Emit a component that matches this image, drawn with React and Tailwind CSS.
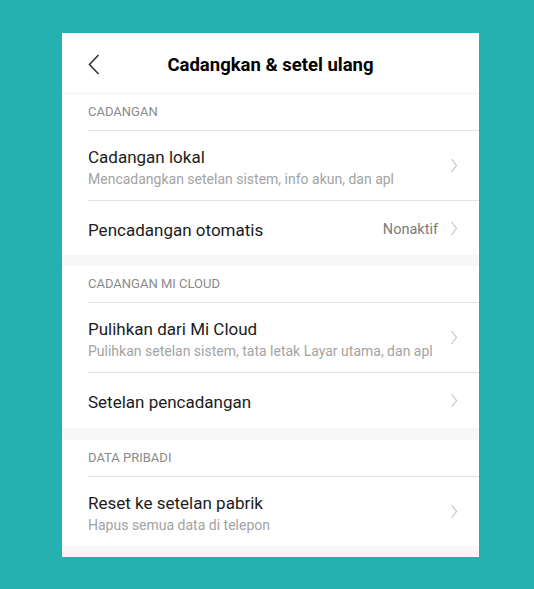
import React from "react";

const font = { fontFamily: "Roboto, 'Noto Sans', sans-serif" };

function Chevron() {
  return (
    <svg width="8" height="15" viewBox="0 0 8 15" className="shrink-0">
      <path d="M1.5 1 L6.5 7.5 L1.5 14" fill="none" stroke="#c4c4c4" strokeWidth="1.2" />
    </svg>
  );
}

function SectionTitle({ children }) {
  return (
    <div className="h-[36px] flex items-center pl-[26px] text-[13px] text-[#8a8a8a]">
      {children}
    </div>
  );
}

function Row({ title, sub, value, tall }) {
  const h = sub ? "h-[69px]" : tall ? "h-[55px]" : "h-[54px]";
  return (
    <div className="ml-[26px] border-t border-[#e4e4e4] flex items-center pr-[21px]">
      <div className={`flex-1 flex flex-col justify-center pt-[4px] ${h}`}>
        <div className="text-[17px] text-[#1c1c1c] leading-[21px]">{title}</div>
        {sub && (
          <div className="text-[14px] text-[#a3a3a3] leading-[18px] mt-[2px]">{sub}</div>
        )}
      </div>
      {value && <span className="text-[14.5px] text-[#7a7a7a] mr-[12px] pt-[4px]">{value}</span>}
      <Chevron />
    </div>
  );
}

function Gap({ h = "h-[11px]" }) {
  return <div className={`${h} bg-[#f7f7f7]`} />;
}

export default function App() {
  return (
    <div className="w-[534px] h-[589px] bg-[#26b1b1] pt-[33px] pl-[62px]" style={font}>
      <div className="w-[417px] h-[524px] bg-white overflow-hidden">
        <div className="h-[61px] relative flex items-center justify-center border-b border-[#f2f2f2] pt-[6px]">
          <svg width="12" height="21" viewBox="0 0 12 21" className="absolute left-[26px] top-[21px]">
            <path d="M10.5 1 L1.5 10.5 L10.5 20" fill="none" stroke="#333" strokeWidth="1.6" />
          </svg>
          <h1 className="text-[18.5px] font-bold text-black">Cadangkan &amp; setel ulang</h1>
        </div>
        <SectionTitle>CADANGAN</SectionTitle>
        <Row title="Cadangan lokal" sub="Mencadangkan setelan sistem, info akun, dan apl" />
        <Row title="Pencadangan otomatis" value="Nonaktif" />
        <Gap />
        <SectionTitle>CADANGAN MI CLOUD</SectionTitle>
        <Row title="Pulihkan dari Mi Cloud" sub="Pulihkan setelan sistem, tata letak Layar utama, dan apl" />
        <Row title="Setelan pencadangan" tall />
        <Gap h="h-[12px]" />
        <SectionTitle>DATA PRIBADI</SectionTitle>
        <Row title="Reset ke setelan pabrik" sub="Hapus semua data di telepon" />
        <div className="h-[20px] bg-[#f7f7f7]" />
      </div>
    </div>
  );
}
